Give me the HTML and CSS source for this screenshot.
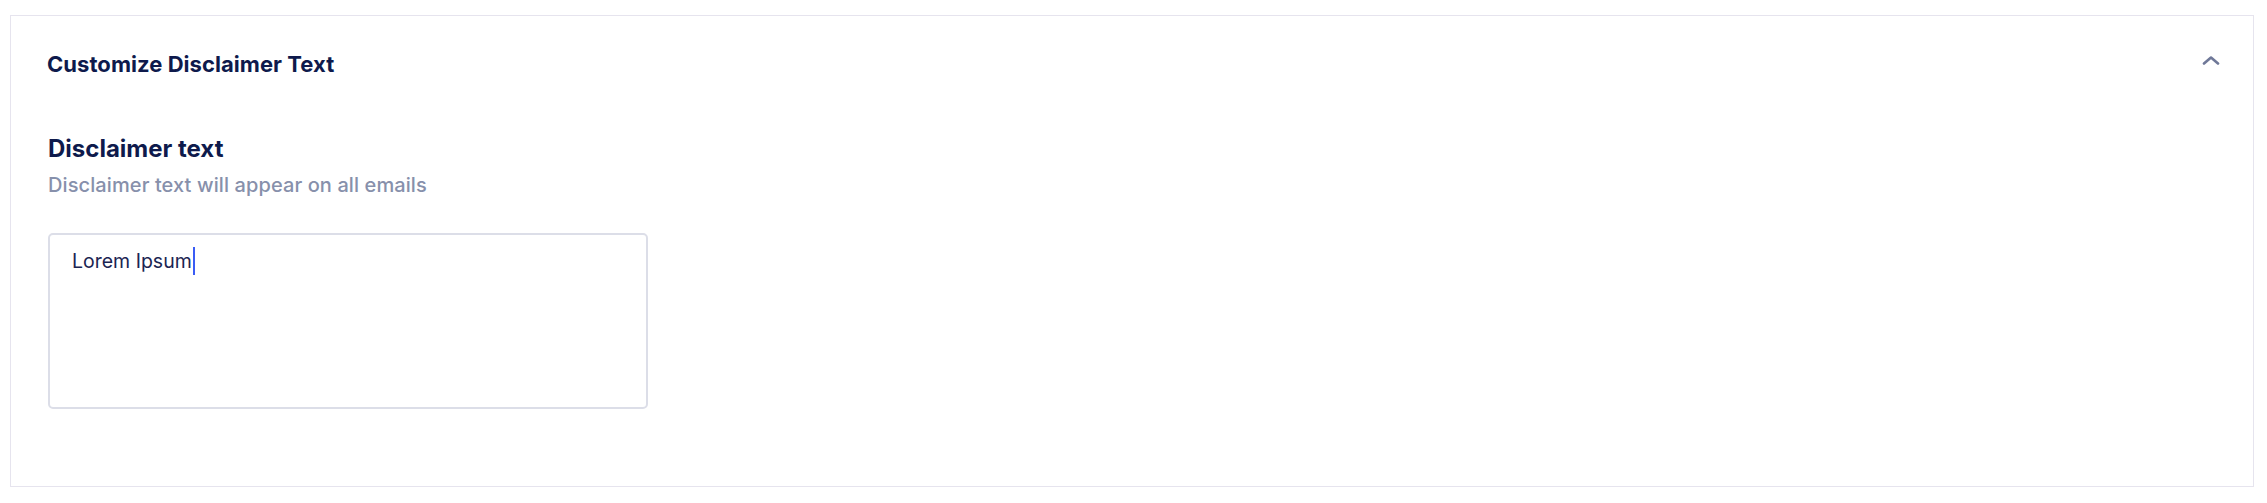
FILE: index.html
```html
<!DOCTYPE html>
<html lang="en">
<head>
<meta charset="utf-8">
<title>Customize Disclaimer Text</title>
<link rel="stylesheet" href="styles.css">
</head>
<body>
<section class="card">
  <header class="card-header">
    <h2 class="card-title">Customize Disclaimer Text</h2>
    <button class="toggle" aria-label="Collapse">
      <svg width="18" height="9" viewBox="0 0 18 9" fill="none">
        <path d="M2 7.5 L9 1.5 L16 7.5" stroke="#6f7898" stroke-width="2.6" stroke-linecap="round" stroke-linejoin="round"/>
      </svg>
    </button>
  </header>
  <div class="card-body">
    <h3 class="field-label">Disclaimer text</h3>
    <p class="field-help">Disclaimer text will appear on all emails</p>
    <div class="textarea"><span class="value">Lorem Ipsum</span><span class="caret"></span></div>
  </div>
</section>
</body>
</html>
```

FILE: styles.css
```css
* { box-sizing: border-box; }
html, body { background: #ffffff; }
body {
  margin: 0;
  padding: 15px 13px 16px 10px;
  font-family: Inter, "Noto Sans", sans-serif;
}
.card {
  border: 1px solid #e6e4ee;
  height: 472px;
  background: #fff;
}
.card-header {
  display: flex;
  align-items: center;
  justify-content: space-between;
  padding: 33px 33px 0 36px;
}
.card-title {
  margin: 0;
  font-size: 22px;
  line-height: 30px;
  font-weight: 700;
  color: #0e1a4c;
  letter-spacing: 0.05px;
}
.toggle {
  border: 0;
  background: none;
  padding: 0;
  margin-top: -8px;
  display: flex;
  cursor: pointer;
}
.card-body {
  padding: 54px 36px 0 37px;
}
.field-label {
  margin: 0;
  font-size: 24px;
  line-height: 32px;
  font-weight: 700;
  color: #0e1a4c;
  letter-spacing: 0;
}
.field-help {
  margin: 6px 0 0;
  font-size: 20px;
  line-height: 28px;
  color: #8790ab;
  font-weight: 500;
  letter-spacing: 0.1px;
}
.textarea {
  margin-top: 34px;
  width: 600px;
  height: 176px;
  border: 2px solid #dcdee8;
  border-radius: 5px;
  padding: 12px 22px;
  font-size: 19.5px;
  line-height: 28px;
  color: #1b2452;
  display: flex;
  align-items: flex-start;
}
.caret {
  display: inline-block;
  width: 2px;
  height: 28px;
  background: #3a5cf5;
  margin-left: 1px;
}
```
